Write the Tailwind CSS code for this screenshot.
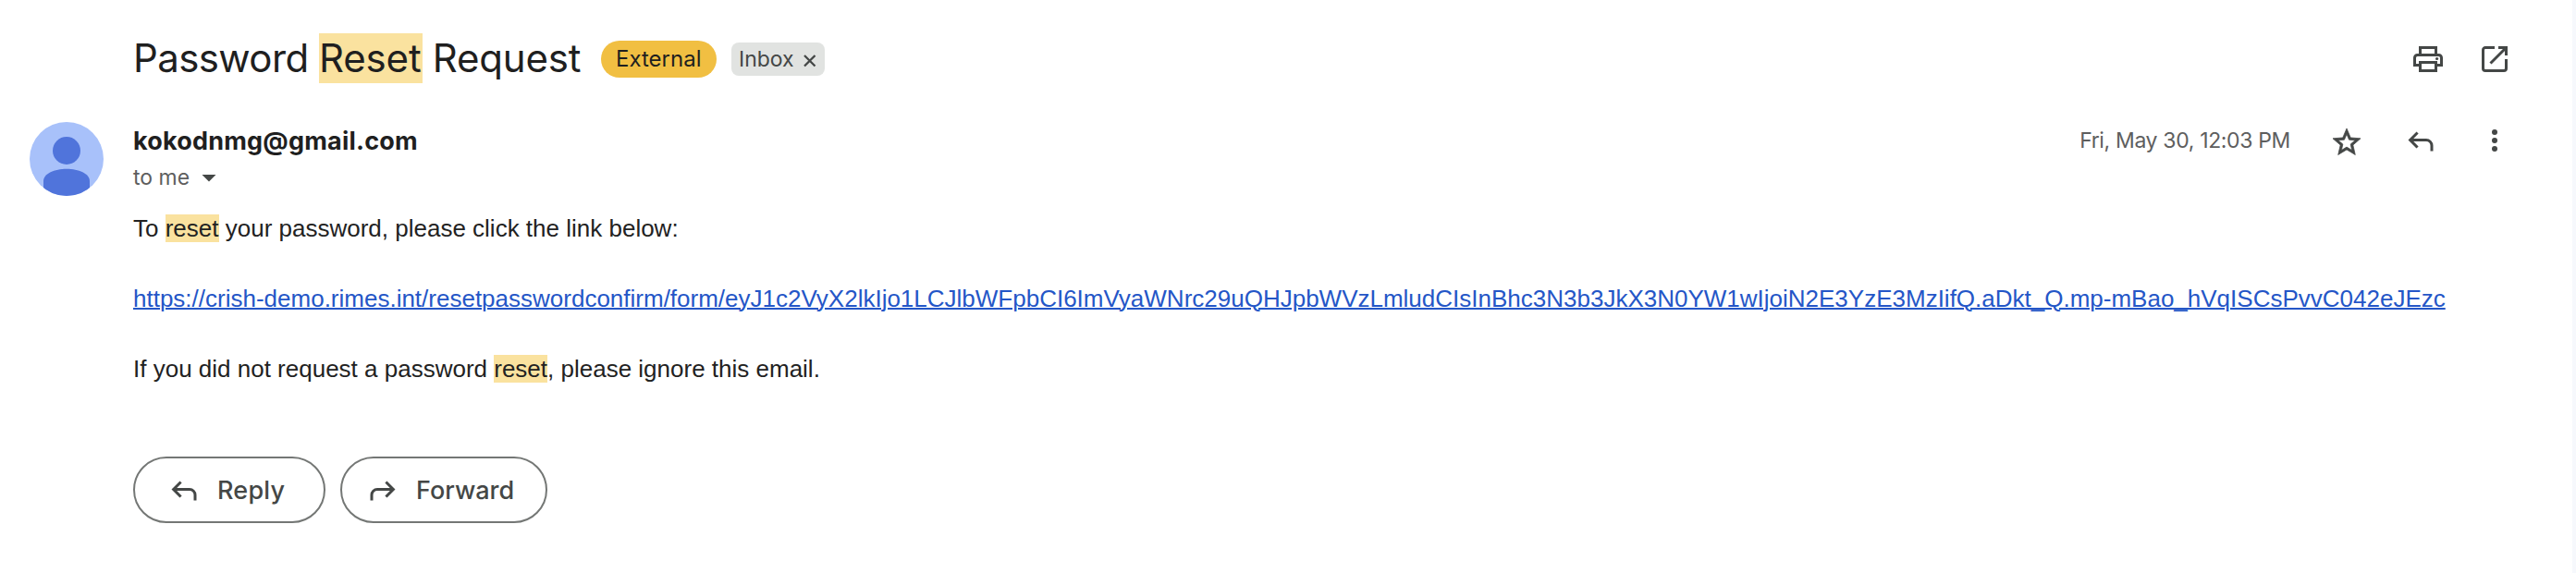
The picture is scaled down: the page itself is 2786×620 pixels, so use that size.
<!DOCTYPE html>
<html lang="en">
<head>
<meta charset="utf-8">
<title>Password Reset Request</title>
<script src="https://cdn.jsdelivr.net/npm/@tailwindcss/browser@4"></script>
</head>
<body class="flex h-[620px] w-[2786px] overflow-hidden bg-[#f6f8fc] font-['Inter',sans-serif] text-[#1f1f1f]">
<main class="h-full w-[2782px] bg-white pt-9">
  <header class="flex h-[54px] items-center justify-between pr-[70px] pl-36">
    <div class="flex items-center">
      <h1 class="flex w-[506px] text-[42px] leading-[54px] whitespace-pre"><span class="w-[201px] tracking-[-0.6px]">Password </span><span class="w-28 bg-[#fae29f] tracking-[-0.15px]">Reset</span><span class="-ml-px tracking-[-0.15px]"> Request</span></h1>
      <span class="mt-0.5 h-10 w-[125px] rounded-full bg-[#f1bf42] pl-4 text-2xl leading-[39px]">External</span>
      <span class="mt-0.5 ml-4 flex h-9 w-[101px] items-center rounded-lg bg-[#e1e3e1] pl-2 text-[23px] leading-[35px] text-[#444746]">
        <span class="w-[70px]">Inbox</span>
        <svg class="mt-1 size-[14px]" viewBox="0 0 14 14" fill="none" stroke="#444746" stroke-width="2.3"><path d="M1 1l11.500 11.500M12.500 1L1 12.500"/></svg>
      </span>
    </div>
    <div class="mt-0.5 flex items-center gap-[42px]">
      <svg class="h-7 w-8" viewBox="0 0 32 28" fill="none" stroke="#444746" stroke-width="3"><path d="M7.5 9.5v-8h17v8M7.5 20.5h-6v-8a3 3 0 0 1 3-3h23a3 3 0 0 1 3 3v8h-6"/><path d="M7.5 17.5h17v9h-17z"/><circle cx="25.6" cy="13.5" r="1.6" fill="#444746" stroke="none"/></svg>
      <svg class="size-7" viewBox="0 0 28 28" fill="none" stroke="#444746" stroke-width="3"><path d="M14 1.5H4a2.5 2.5 0 0 0-2.500 2.500v20a2.500 2.500 0 0 0 2.500 2.500h20a2.500 2.500 0 0 0 2.500-2.500V14M18 1.500h8.500V10M26 2 9.500 18.500"/></svg>
    </div>
  </header>

  <section class="flex pl-8">
    <svg class="mt-[42px] mr-8 size-20 shrink-0" viewBox="0 0 80 80">
      <clipPath id="disc"><circle cx="40" cy="40" r="40"/></clipPath>
      <g clip-path="url(#disc)"><path fill="#a8c1fa" d="M0 0h80v80H0z"/><circle cx="40" cy="31" r="15" fill="#5074db"/><path fill="#5074db" d="M15 80V64c0-8 12-13.200 25-13.200S65 56 65 64v16z"/></g>
    </svg>
    <div class="grow">
      <div class="flex h-[138px] items-start justify-between pt-[42px] pr-[66px]">
        <div>
          <div class="pt-px text-[27px] leading-10 font-bold tracking-[0.2px]">kokodnmg@gmail.com</div>
          <div class="flex items-center text-[23px] leading-[38px] text-[#5e5e5e]"><span class="w-[74px]">to me</span><svg class="mt-0.5 h-2 w-4" viewBox="0 0 16 8"><path d="M.5 0h15L8 7.500z" fill="#444746"/></svg></div>
        </div>
        <div class="flex h-[42px] items-center gap-11">
          <span class="-mt-0.5 -mr-px text-[23px] leading-[38px] tracking-[-0.35px] text-[#5e5e5e]">Fri, May 30, 12:03 PM</span>
          <svg class="mt-0.5 size-9" viewBox="0 0 24 24" fill="#444746" stroke="#444746" stroke-width=".5"><path d="M22 9.240l-7.190-.620L12 2 9.190 8.630 2 9.240l5.460 4.730L5.820 21 12 17.270 18.180 21l-1.630-7.030L22 9.240zM12 15.400l-3.760 2.270 1-4.280-3.320-2.880 4.380-.380L12 6.100l1.710 4.040 4.380.380-3.320 2.880 1 4.280L12 15.400z"/></svg>
          <svg class="size-9" viewBox="0 -960 960 960" fill="#444746"><path d="M760-200v-160q0-50-35-85t-85-35H273l144 144-57 56-240-240 240-240 57 56-144 144h367q83 0 141.500 58.500T840-360v160h-80Z"/></svg>
          <svg class="-mt-0.5 size-9" viewBox="0 0 36 36" fill="#444746"><circle cx="18" cy="9" r="3"/><circle cx="18" cy="18" r="3"/><circle cx="18" cy="27" r="3"/></svg>
        </div>
      </div>

      <div class="font-['Liberation_Sans',Arial,sans-serif] text-[26px] leading-[38px] whitespace-nowrap text-[#222222]">
        <p>To <span class="bg-[#fae29f]">reset</span> your password, please click the link below:</p>
        <p class="mt-[38px]"><a href="#" class="text-[#2456c7] underline decoration-2">https://crish-demo.rimes.int/resetpasswordconfirm/form/eyJ1c2VyX2lkIjo1LCJlbWFpbCI6ImVyaWNrc29uQHJpbWVzLmludCIsInBhc3N3b3JkX3N0YW1wIjoiN2E3YzE3MzIifQ.aDkt_Q.mp-mBao_hVqISCsPvvC042eJEzc</a></p>
        <p class="mt-[38px]">If you did not request a password <span class="bg-[#fae29f]">reset</span>, please ignore this email.</p>
      </div>

      <div class="mt-[76px] flex gap-4 text-[27px] leading-9 font-medium text-[#444746]">
        <button class="flex h-[72px] w-52 items-center gap-4 rounded-full border-2 border-[#747775] pl-[35px]">
          <svg class="mt-px mr-0.5 size-9" viewBox="0 -960 960 960" fill="#444746"><path d="M760-200v-160q0-50-35-85t-85-35H273l144 144-57 56-240-240 240-240 57 56-144 144h367q83 0 141.500 58.500T840-360v160h-80Z"/></svg>
          <span class="pt-px tracking-[0.2px]">Reply</span>
        </button>
        <button class="flex h-[72px] w-56 items-center gap-4 rounded-full border-2 border-[#747775] pl-[26px]">
          <svg class="mt-px mr-0.5 size-9 -scale-x-100" viewBox="0 -960 960 960" fill="#444746"><path d="M760-200v-160q0-50-35-85t-85-35H273l144 144-57 56-240-240 240-240 57 56-144 144h367q83 0 141.500 58.500T840-360v160h-80Z"/></svg>
          <span class="pt-px">Forward</span>
        </button>
      </div>
    </div>
  </section>
</main>
</body>
</html>
